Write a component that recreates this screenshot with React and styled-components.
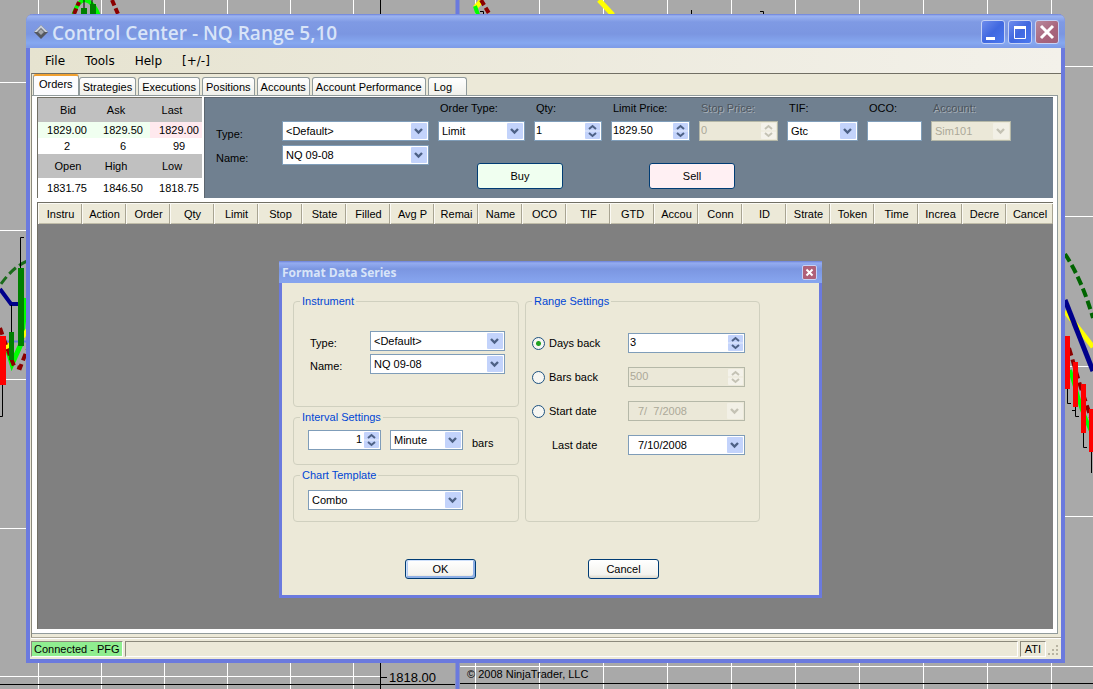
import React, { useState } from 'react';
import styled, { createGlobalStyle, css } from 'styled-components';

const GlobalStyle = createGlobalStyle`
    * { box-sizing: border-box; }
    body {
        margin: 0;
        background: #a9a9a9;
        font-family: 'Liberation Sans', Arial, sans-serif;
        font-size: 11px;
        line-height: 14px;
        color: #000;
    }
    button, input, select { font: inherit; color: inherit; }
`;

const Desktop = styled.div`
    position: relative;
    display: flex;
    min-height: 100vh;
    padding: 14px 28px 26px 26px;
`;

// chart windows lying behind the control center
const Backdrop = styled.svg`
    position: absolute;
    inset: 0;
    width: 100%;
    height: 100%;
    font-family: 'Liberation Sans', Arial, sans-serif;
`;

const Window = styled.div`
    position: relative;
    flex: 1;
    display: flex;
    flex-direction: column;
    min-width: 0;
    border: solid #6b7ade;
    border-width: 0 4px 4px;
    border-radius: 7px 7px 0 0;
    background: #ece9d8;
`;

const TitleBar = styled.header`
    display: flex;
    align-items: center;
    gap: 3px;
    height: 34px;
    margin: 0 -4px;
    padding: 2px 6px 0 8px;
    border-radius: 7px 7px 0 0;
    background: linear-gradient(#6b80d8 0, #9cb4f2 2px, #7f9ae4 8px, #7b96e1 20px, #86a8f0 29px, #7e9ce8 33px);
`;

const WindowTitle = styled.h1`
    flex: 1;
    margin: 0 0 0 1px;
    padding-top: 1px;
    font: 600 19px/24px 'Open Sans', 'Noto Sans', sans-serif;
    color: #d8e4f8;
`;

const CaptionButton = styled.button`
    display: flex;
    width: 24px;
    height: 24px;
    padding: 0;
    border: 1px solid #c5d2f6;
    border-radius: 3px;
    background: ${({ $close }) =>
        $close
            ? 'linear-gradient(135deg, #b98a9c, #a8647c 60%, #a06078)'
            : 'linear-gradient(135deg, #6e8cec, #4068e0 50%, #4a78f0)'};
    ${({ $small }) => $small && css`
        width: 15px;
        height: 15px;
        border-radius: 2px;
        background: #b06078;
    `}
    svg { width: 100%; height: 100%; }
`;

const MenuBar = styled.nav`
    display: flex;
    align-items: center;
    gap: 20px;
    height: 25px;
    padding-left: 15px;
    background: linear-gradient(90deg, #e6e3d0, #f3f1ea);
`;

const MenuItem = styled.button`
    padding: 0;
    border: 0;
    background: none;
    font: 12px/18px 'DejaVu Sans', sans-serif;
`;

const Workspace = styled.main`
    flex: 1;
    display: flex;
    flex-direction: column;
    margin-left: 1px;
    border-top: 1px solid #716f64;
    border-left: 1px solid #8c8a7c;
    padding: 0 3px 3px 0;
`;

const TabList = styled.div`
    display: flex;
    align-items: flex-end;
    gap: 2px;
    height: 21px;
    padding-left: 1px;
`;

const Tab = styled.button`
    height: 18px;
    padding: 0 3px;
    border: 1px solid #919b9c;
    border-bottom: 0;
    border-radius: 3px 3px 0 0;
    background: linear-gradient(#fff, #f0f0ea);
    white-space: nowrap;
    ${({ $wide }) => $wide && css`
        padding: 0 14px 0 5px;
    `}
    ${({ $active }) => $active && css`
        height: 21px;
        padding: 0 5px 3px;
        margin-right: -2px;
        border-top: 2px solid #f0a030;
        background: #fcfcfe;
    `}
`;

const TabPage = styled.div`
    flex: 1;
    display: flex;
    flex-direction: column;
    gap: 4px;
    padding: 1px 4px 4px 5px;
    border: solid #919b9c;
    border-width: 1px 1px 1px 0;
    background: #fff;
`;

const OrderBar = styled.div`
    display: flex;
    gap: 2px;
    height: 101px;
`;

const QuoteTable = styled.table`
    flex: none;
    width: 165px;
    border-collapse: separate;
    border-spacing: 0;
    table-layout: fixed;
    border: solid #716f64;
    border-width: 1px 0 0 1px;
    text-align: center;
    th {
        width: 56px;
        height: 24px;
        padding: 0;
        background: #c0c0c0;
        font-weight: normal;
    }
    th:nth-child(1) { padding-left: 4px; }
    th:nth-child(2) { padding-right: 12px; }
    th:nth-child(3) { width: auto; padding-right: 8px; }
    td { height: 16px; padding: 0 0 0 2px; }
    td:nth-child(3) { padding-left: 6px; }
    tr:last-child td { height: 20px; }
`;

const QuoteCell = styled.td`
    background: ${({ $tint }) => $tint};
`;

const OrderPanel = styled.form`
    flex: 1;
    display: flex;
    border: solid #5c6670;
    border-width: 1px 0 0 1px;
    background: #708090;
`;

const InstrumentFields = styled.div`
    display: grid;
    grid-template-columns: 66px 147px;
    grid-auto-rows: 20px;
    align-content: start;
    align-items: center;
    row-gap: 4px;
    padding: 23px 0 0 11px;
    label { padding-top: 6px; }
`;

const OrderFields = styled.div`
    padding: 3px 0 0 9px;
`;

const FieldRow = styled.div`
    display: flex;
    gap: 9px;
`;

const Field = styled.div`
    width: ${({ $width }) => $width}px;
    label {
        display: block;
        height: 20px;
        padding-left: 2px;
        white-space: nowrap;
        ${({ $disabled }) => $disabled && css`
            color: #4c545c;
            text-shadow: 1px 1px #a8b0b8;
        `}
    }
`;

const ButtonRow = styled.div`
    display: flex;
    gap: 86px;
    padding: 22px 0 0 39px;
`;

const ControlBox = styled.span`
    flex: none;
    display: grid;
    width: ${({ $width }) => ($width ? `${$width}px` : '100%')};
    height: 20px;
    border: 1px solid ${({ $disabled }) => ($disabled ? '#b5b8a8' : '#7f9db9')};
    background: ${({ $disabled }) => ($disabled ? '#ebe8d8' : '#fff')};
    color: ${({ $disabled }) => ($disabled ? '#aca899' : '#000')};
    > * { grid-area: 1 / 1; }
    > svg {
        justify-self: end;
        align-self: center;
        width: 17px;
        height: 18px;
        pointer-events: none;
    }
    select, input {
        appearance: none;
        width: 100%;
        min-width: 0;
        height: 18px;
        margin: 0;
        padding: 0 18px 0 ${({ $indent }) => $indent || 3}px;
        border: 0;
        border-radius: 0;
        outline: 0;
        background: transparent;
        text-align: ${({ $align }) => $align || 'left'};
    }
    select:disabled, input:disabled { color: #aca899; opacity: 1; }
    input { padding-left: ${({ $indent }) => $indent || 1}px; padding-bottom: 2px; }
`;

const PushButton = styled.button`
    width: ${({ $large }) => ($large ? 86 : 71)}px;
    height: ${({ $large }) => ($large ? 26 : 20)}px;
    padding: 0;
    border: 1px solid #003c74;
    border-radius: 3px;
    background: ${({ $fill }) => $fill || 'linear-gradient(#fff, #f4f3ee 80%, #dcd8cc)'};
    box-shadow: ${({ $default }) =>
        $default ? 'inset 1px 1px #cee0fb, inset -2px -2px #8fb0e6, inset 2px 0 #b4ccf4' : 'none'};
`;

const OrdersArea = styled.div`
    flex: 1;
    display: flex;
    flex-direction: column;
    border: solid #716f64;
    border-width: 1px 0 0 1px;
    background: #808080;
`;

const OrdersTable = styled.table`
    width: 100%;
    border-collapse: separate;
    border-spacing: 0;
    table-layout: fixed;
    th {
        width: 44px;
        height: 21px;
        padding: 0;
        border: solid #fbfaf4;
        border-width: 1px 0 0 1px;
        box-shadow: inset -1px 0 #a8a492, inset 0 -1px #c0bca8;
        background: #ece9d8;
        font-weight: normal;
        white-space: nowrap;
    }
    th:last-child { width: auto; }
`;

const StatusBar = styled.footer`
    display: flex;
    align-items: stretch;
    gap: 2px;
    height: 22px;
    margin-left: 1px;
    padding: 3px 1px 2px 0;
    border-top: 1px solid #aca899;
    box-shadow: inset 0 1px #fff;
`;

const StatusPanel = styled.div`
    flex: ${({ $fill }) => ($fill ? 1 : 'none')};
    padding: 0 ${({ $online }) => ($online ? 2 : 4)}px;
    border: 1px solid;
    border-color: #8c8a7c #fff #fff #8c8a7c;
    background: ${({ $online }) => ($online ? '#90ee90' : 'transparent')};
`;

const SizeGrip = styled.svg`
    align-self: flex-end;
    width: 12px;
    height: 12px;
`;

const Dialog = styled.section`
    position: absolute;
    left: 249px;
    top: 247px;
    width: 543px;
    border: solid #6b7ade;
    border-width: 0 3px 3px;
    background: #ece9d8;
`;

const DialogTitle = styled.header`
    display: flex;
    align-items: center;
    justify-content: space-between;
    height: 22px;
    margin: 0 -3px;
    padding: 0 5px 0 3px;
    background: linear-gradient(#6b80d8 0, #94acf0 2px, #7b96e1 8px, #86a4ee 20px);
    h2 {
        margin: 0;
        padding-top: 2px;
        font: bold 12px/18px 'Open Sans', 'Noto Sans', sans-serif;
        color: #d8e4f8;
    }
`;

const DialogBody = styled.form`
    display: grid;
    grid-template-columns: 226px 235px;
    grid-template-rows: 113px 55px 54px;
    gap: 3px 6px;
    padding: 11px 11px 0;
`;

const Group = styled.fieldset`
    display: flex;
    flex-direction: column;
    min-width: 0;
    margin: 0;
    padding: 0;
    border: 1px solid #d0d0bf;
    border-radius: 4px;
    ${({ $tall }) => $tall && css`
        grid-column: 2;
        grid-row: 1 / 4;
    `}
    legend {
        margin-left: 6px;
        padding: 0 2px;
        color: #0046d5;
    }
`;

const PairGrid = styled.div`
    display: grid;
    grid-template-columns: 60px 135px;
    grid-auto-rows: 20px;
    align-items: center;
    row-gap: 3px;
    padding: 23px 0 0 16px;
    label { padding-top: 3px; }
`;

const InlineRow = styled.div`
    display: flex;
    align-items: center;
    gap: 9px;
    padding: ${({ $top }) => $top || 6}px 0 0 14px;
    label { padding-top: 6px; }
`;

const RangeGrid = styled.div`
    display: grid;
    grid-template-columns: 96px 117px;
    row-gap: 14px;
    align-items: center;
    padding: 25px 0 0 6px;
`;

const RadioLabel = styled.label`
    display: flex;
    align-items: center;
    gap: 4px;
    input {
        appearance: none;
        width: 13px;
        height: 13px;
        margin: 0;
        border: 1px solid #1c5180;
        border-radius: 50%;
        background: #f6f6f2;
    }
    input:checked {
        background: radial-gradient(circle, #21a121 0 2px, #f6f6f2 3px);
    }
`;

const LastDateLabel = styled.label`
    padding-left: 20px;
`;

const DialogButtons = styled.div`
    grid-column: 1 / 3;
    display: flex;
    gap: 112px;
    padding: 34px 0 16px 112px;
`;

const DownArrow = ({ disabled }) => (
    <svg viewBox="0 0 17 18">
        <rect x="0" y="1" width="16" height="16" rx="1" fill={disabled ? '#f2f0e6' : '#c3d3fb'} />
        <path d="M4 7 L7.5 10.5 L11 7" fill="none" stroke={disabled ? '#c4c2b4' : '#4d6185'} strokeWidth="2.4" />
    </svg>
);

const SpinArrows = ({ disabled }) => (
    <svg viewBox="0 0 17 18">
        <rect x="1" y="1" width="15" height="16" rx="1" fill={disabled ? '#f4f2ea' : '#c3d3fb'} />
        <path d="M1 9 H16" stroke={disabled ? '#ebe8d8' : '#e4ecfd'} />
        <path
            d="M5 7 L8.5 4 L12 7 M5 11 L8.5 14 L12 11"
            fill="none"
            stroke={disabled ? '#c4c2b4' : '#4d6185'}
            strokeWidth="2"
        />
    </svg>
);

const ComboBox = ({ id, value, width, disabled, indent, label }) => (
    <ControlBox $width={width} $disabled={disabled} $indent={indent}>
        <select id={id} defaultValue={value} disabled={disabled} aria-label={label}>
            <option>{value}</option>
        </select>
        <DownArrow disabled={disabled} />
    </ControlBox>
);

const Spinner = ({ id, value, width, disabled, align, label }) => (
    <ControlBox $width={width} $disabled={disabled} $align={align}>
        <input id={id} defaultValue={value} disabled={disabled} inputMode="decimal" aria-label={label} />
        <SpinArrows disabled={disabled} />
    </ControlBox>
);

const range = (start, step, count) => Array.from({ length: count }, (_, i) => start + step * i);

const ChartBackdrop = () => (
    <Backdrop aria-hidden="true">
        <g stroke="#fff">
            {range(38, 63, 6).map(x => <path key={x} d={`M${x}.5 0 V689`} />)}
            {range(475, 64, 10).map(x => <path key={x} d={`M${x}.5 0 V689`} />)}
            {[82, 230, 379, 528, 676].map(y => <path key={y} d={`M0 ${y}.5 H380`} />)}
            {[66, 216, 366, 516, 666].map(y => <path key={y} d={`M460 ${y}.5 H1093`} />)}
        </g>
        <path d="M380.5 0 V689 M380 677.5 H387 M0 684.5 H455 M460 683.5 H1093" stroke="#000" />
        <path d="M457.5 0 V689" stroke="#6b7ade" strokeWidth="4" />
        <text x="389" y="682" fontSize="13">1818.00</text>
        <text x="467" y="678" fontSize="11">© 2008 NinjaTrader, LLC</text>

        <g fill="none">
            <path d="M73 16 Q78 0 85 0 Q94 2 99 16" stroke="#00ff00" strokeWidth="4" />
            <path d="M74 14 L79 2 M112 0 L118 14" stroke="#8b0000" strokeWidth="4" strokeDasharray="6 3" />
            <path d="M84 0 V14 M92 0 V14" stroke="#000" />
            <path d="M475 8 L482 0" stroke="#ffff00" strokeWidth="5" />
            <path d="M475 6 L478 15" stroke="#00ff00" strokeWidth="4" />
            <path d="M481 0 L490 15" stroke="#8b0000" strokeWidth="4" strokeDasharray="6 3" />
            <path d="M599 0 L613 15" stroke="#ffff00" strokeWidth="5" />
            <path d="M480 11.5 H483.5 V14 M691.5 10 V14 M760 11.5 H763.5 V14" stroke="#000" />
        </g>
        <path d="M81 8 H87 V15 H81 Z M90 4 H96 V15 H90 Z" fill="#008000" />

        <g fill="none">
            <path d="M5 341.5 H27" stroke="#6b7ade" strokeWidth="2" />
            <path d="M1 284 Q13 267 27 261" stroke="#1a6b1a" strokeWidth="3" strokeDasharray="9 4" />
            <path d="M0 289 L11 304 H26" stroke="#00008b" strokeWidth="4" />
            <path d="M6 344 L12 364 L21 344 L26 298" stroke="#00ff00" strokeWidth="5" />
            <path d="M6 352 L8 343 M23 337 L27 330" stroke="#ffff00" strokeWidth="4" />
            <path d="M0 328 L6 345 L14 366 L20 368 L27 350" stroke="#8b0000" strokeWidth="4" strokeDasharray="7 4" />
            <path d="M11.5 305 V332 M20.5 268 V237.5 H24 M2.5 385 V416.5 H0" stroke="#000" />
        </g>
        <path d="M9 332 H14 V360 H9 Z M18 268 H24 V346 H18 Z" fill="#008000" />
        <path d="M0 336 H6 V385 H0 Z" fill="#f00" />

        <g fill="none">
            <path d="M1065 254 Q1082 280 1093 318" stroke="#006400" strokeWidth="4" strokeDasharray="9 4" />
            <path d="M1065 311 L1093 347" stroke="#ffff00" strokeWidth="5" />
            <path d="M1065 300 L1093 371" stroke="#00008b" strokeWidth="5" />
            <path d="M1070 370 L1082 410 L1093 436" stroke="#00ff00" strokeWidth="4" />
            <path d="M1069 348 L1080 385 L1091 418" stroke="#8b0000" strokeWidth="4" strokeDasharray="8 4" />
            <path d="M1067.5 389 V403.5 H1071 M1075.5 407 V416.5 H1079 M1072 410.5 H1076 M1083.5 433 V447.5 H1087 M1091.5 452 V473" stroke="#000" />
        </g>
        <path d="M1065 336 H1070 V389 H1065 Z M1073 362 H1078 V407 H1073 Z M1081 384 H1086 V433 H1081 Z M1089 409 H1093 V452 H1089 Z" fill="#f00" />
    </Backdrop>
);

const tabs = ['Orders', 'Strategies', 'Executions', 'Positions', 'Accounts', 'Account Performance', 'Log'];

const columns = [
    'Instru', 'Action', 'Order', 'Qty', 'Limit', 'Stop', 'State', 'Filled', 'Avg P', 'Remai', 'Name', 'OCO',
    'TIF', 'GTD', 'Accou', 'Conn', 'ID', 'Strate', 'Token', 'Time', 'Increa', 'Decre', 'Cancel',
];

const Quotes = () => (
    <QuoteTable>
        <tbody>
            <tr><th>Bid</th><th>Ask</th><th>Last</th></tr>
            <tr>
                <QuoteCell $tint="#f0fff0">1829.00</QuoteCell>
                <QuoteCell $tint="#f0fff0">1829.50</QuoteCell>
                <QuoteCell $tint="#ffe9ee">1829.00</QuoteCell>
            </tr>
            <tr><td>2</td><td>6</td><td>99</td></tr>
            <tr><th>Open</th><th>High</th><th>Low</th></tr>
            <tr><td>1831.75</td><td>1846.50</td><td>1818.75</td></tr>
        </tbody>
    </QuoteTable>
);

const OrderEntry = () => (
    <OrderPanel onSubmit={e => e.preventDefault()}>
        <InstrumentFields>
            <label htmlFor="type">Type:</label>
            <ComboBox id="type" value="<Default>" />
            <label htmlFor="name">Name:</label>
            <ComboBox id="name" value="NQ 09-08" />
        </InstrumentFields>
        <OrderFields>
            <FieldRow>
                <Field $width={87}>
                    <label htmlFor="orderType">Order Type:</label>
                    <ComboBox id="orderType" value="Limit" />
                </Field>
                <Field $width={68}>
                    <label htmlFor="qty">Qty:</label>
                    <Spinner id="qty" value="1" />
                </Field>
                <Field $width={79}>
                    <label htmlFor="limitPrice">Limit Price:</label>
                    <Spinner id="limitPrice" value="1829.50" />
                </Field>
                <Field $width={79} $disabled>
                    <label htmlFor="stopPrice">Stop Price:</label>
                    <Spinner id="stopPrice" value="0" disabled />
                </Field>
                <Field $width={71}>
                    <label htmlFor="tif">TIF:</label>
                    <ComboBox id="tif" value="Gtc" />
                </Field>
                <Field $width={55}>
                    <label htmlFor="oco">OCO:</label>
                    <ControlBox><input id="oco" /></ControlBox>
                </Field>
                <Field $width={80} $disabled>
                    <label htmlFor="account">Account:</label>
                    <ComboBox id="account" value="Sim101" disabled />
                </Field>
            </FieldRow>
            <ButtonRow>
                <PushButton $large $fill="#f0fff0">Buy</PushButton>
                <PushButton $large $fill="#fff0f3">Sell</PushButton>
            </ButtonRow>
        </OrderFields>
    </OrderPanel>
);

const FormatDataSeries = () => {
    const [mode, setMode] = useState('days');
    return (
        <Dialog role="dialog" aria-labelledby="dialogTitle">
            <DialogTitle>
                <h2 id="dialogTitle">Format Data Series</h2>
                <CaptionButton $close $small aria-label="Close">
                    <svg viewBox="0 0 13 13"><path d="M3.5 3.5 L9.5 9.5 M9.5 3.5 L3.5 9.5" stroke="#fff" strokeWidth="2" /></svg>
                </CaptionButton>
            </DialogTitle>
            <DialogBody onSubmit={e => e.preventDefault()}>
                <Group>
                    <legend>Instrument</legend>
                    <PairGrid>
                        <label htmlFor="seriesType">Type:</label>
                        <ComboBox id="seriesType" value="<Default>" />
                        <label htmlFor="seriesName">Name:</label>
                        <ComboBox id="seriesName" value="NQ 09-08" />
                    </PairGrid>
                </Group>
                <Group>
                    <legend>Interval Settings</legend>
                    <InlineRow>
                        <Spinner label="Interval" value="1" width={73} align="right" />
                        <ComboBox id="unit" value="Minute" width={73} />
                        <label htmlFor="unit">bars</label>
                    </InlineRow>
                </Group>
                <Group>
                    <legend>Chart Template</legend>
                    <InlineRow $top={8}>
                        <ComboBox value="Combo" width={155} label="Chart Template" />
                    </InlineRow>
                </Group>
                <Group $tall>
                    <legend>Range Settings</legend>
                    <RangeGrid>
                        <RadioLabel>
                            <input type="radio" name="mode" checked={mode === 'days'} onChange={() => setMode('days')} />
                            Days back
                        </RadioLabel>
                        <Spinner value="3" label="Days back" />
                        <RadioLabel>
                            <input type="radio" name="mode" checked={mode === 'bars'} onChange={() => setMode('bars')} />
                            Bars back
                        </RadioLabel>
                        <Spinner value="500" label="Bars back" disabled />
                        <RadioLabel>
                            <input type="radio" name="mode" checked={mode === 'start'} onChange={() => setMode('start')} />
                            Start date
                        </RadioLabel>
                        <ComboBox value={'7/\u00a0 7/2008'} label="Start date" indent={9} disabled />
                        <LastDateLabel htmlFor="lastDate">Last date</LastDateLabel>
                        <ComboBox id="lastDate" value="7/10/2008" indent={9} />
                    </RangeGrid>
                </Group>
                <DialogButtons>
                    <PushButton $default>OK</PushButton>
                    <PushButton type="button">Cancel</PushButton>
                </DialogButtons>
            </DialogBody>
        </Dialog>
    );
};

const App = () => {
    const [active, setActive] = useState('Orders');
    return (
        <>
            <GlobalStyle />
            <Desktop>
                <ChartBackdrop />
                <Window>
                    <TitleBar>
                        <svg width="14" height="14" viewBox="0 0 14 14">
                            <path d="M7 0 L14 7 L7 14 L0 7 Z" fill="#55585f" />
                            <path d="M7 0 L14 7 L11 7 L7 3 L3 7 L0 7 Z" fill="#c9ced8" />
                            <path d="M7 4 L10 7 L7 10 L4 7 Z" fill="#a4a8ae" />
                        </svg>
                        <WindowTitle>Control Center - NQ Range 5,10</WindowTitle>
                        <CaptionButton aria-label="Minimize">
                            <svg viewBox="0 0 22 22"><path d="M4 17.5 H13" stroke="#fff" strokeWidth="3" /></svg>
                        </CaptionButton>
                        <CaptionButton aria-label="Maximize">
                            <svg viewBox="0 0 22 22">
                                <path d="M5.5 5 V17.5 H16.5 V5" fill="none" stroke="#fff" />
                                <path d="M5 6.5 H17" stroke="#fff" strokeWidth="3" />
                            </svg>
                        </CaptionButton>
                        <CaptionButton $close aria-label="Close">
                            <svg viewBox="0 0 22 22"><path d="M5 5 L17 17 M17 5 L5 17" stroke="#fff" strokeWidth="3" /></svg>
                        </CaptionButton>
                    </TitleBar>
                    <MenuBar>
                        {['File', 'Tools', 'Help', '[+/-]'].map(item => <MenuItem key={item}>{item}</MenuItem>)}
                    </MenuBar>
                    <Workspace>
                        <TabList role="tablist">
                            {tabs.map(tab => (
                                <Tab
                                    key={tab}
                                    role="tab"
                                    aria-selected={tab === active}
                                    $active={tab === active}
                                    $wide={tab === 'Log'}
                                    onClick={() => setActive(tab)}
                                >
                                    {tab}
                                </Tab>
                            ))}
                        </TabList>
                        <TabPage>
                            <OrderBar>
                                <Quotes />
                                <OrderEntry />
                            </OrderBar>
                            <OrdersArea>
                                <OrdersTable>
                                    <thead>
                                        <tr>{columns.map(column => <th key={column}>{column}</th>)}</tr>
                                    </thead>
                                </OrdersTable>
                            </OrdersArea>
                        </TabPage>
                    </Workspace>
                    <StatusBar>
                        <StatusPanel $online>Connected - PFG</StatusPanel>
                        <StatusPanel $fill />
                        <StatusPanel>ATI</StatusPanel>
                        <SizeGrip viewBox="0 0 12 12">
                            <path d="M8 0h2v2h-2z M4 4h2v2h-2z M8 4h2v2h-2z M0 8h2v2h-2z M4 8h2v2h-2z M8 8h2v2h-2z" fill="#b8b4a2" />
                        </SizeGrip>
                    </StatusBar>
                    <FormatDataSeries />
                </Window>
            </Desktop>
        </>
    );
};

export default App;
